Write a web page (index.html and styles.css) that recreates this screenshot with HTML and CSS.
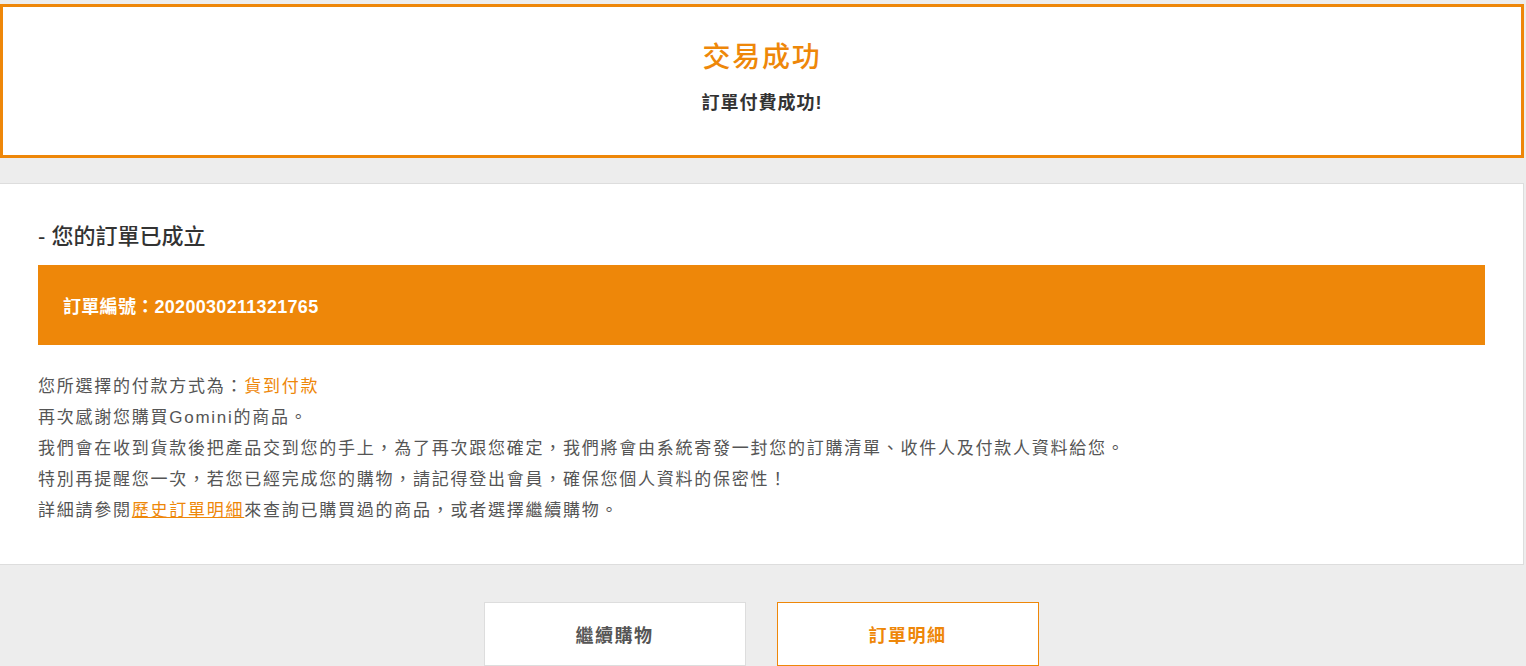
FILE: index.html
```html
<!DOCTYPE html>
<html lang="zh-Hant">

<head>
    <meta charset="UTF-8">
    <meta name="viewport" content="width=device-width, initial-scale=1.0">
    <title>交易成功</title>
    <link rel="stylesheet" href="styles.css">
</head>

<body>
    <div class="page">
        <div class="result">
            <h1 class="result-title">交易成功</h1>
            <p class="result-sub">訂單付費成功!</p>
        </div>

        <div class="order">
            <h2 class="order-title">- 您的訂單已成立</h2>
            <div class="order-no">訂單編號：2020030211321765</div>
            <div class="order-text">
                <p>您所選擇的付款方式為：<span class="hl">貨到付款</span></p>
                <p>再次感謝您購買Gomini的商品。</p>
                <p>我們會在收到貨款後把產品交到您的手上，為了再次跟您確定，我們將會由系統寄發一封您的訂購清單、收件人及付款人資料給您。</p>
                <p>特別再提醒您一次，若您已經完成您的購物，請記得登出會員，確保您個人資料的保密性！</p>
                <p>詳細請參閱<a href="#" class="link">歷史訂單明細</a>來查詢已購買過的商品，或者選擇繼續購物。</p>
            </div>
        </div>

        <div class="actions">
            <a href="#" class="btn">繼續購物</a>
            <a href="#" class="btn btn-main">訂單明細</a>
        </div>
    </div>
</body>

</html>
```

FILE: styles.css
```css
body {
    margin: 0;
    background: #ededed;
    font-family: "Liberation Sans", "Noto Sans CJK TC", sans-serif;
    color: #555;
}

.page {
    width: 1524px;
    padding-top: 4px;
}

.result {
    background: #fff;
    border: 3px solid #ee8709;
    padding-top: 31px;
    box-sizing: border-box;
    height: 154px;
    text-align: center;
}

.result-title {
    margin: 0;
    font-size: 28px;
    line-height: 40px;
    font-weight: 500;
    letter-spacing: 1.8px;
    color: #ee8709;
}

.result-sub {
    margin: 12px 0 0;
    font-size: 18px;
    line-height: 26px;
    font-weight: bold;
    letter-spacing: 1px;
    color: #333;
}

.order {
    margin-top: 25px;
    background: #fff;
    border: 1px solid #ddd;
    border-left: none;
    padding: 38px 38px 38px;
}

.order-title {
    margin: 0 0 13px;
    font-size: 22px;
    line-height: 30px;
    font-weight: 500;
    color: #333;
}

.order-no {
    height: 80px;
    display: flex;
    align-items: center;
    padding-left: 25px;
    background: #ee8709;
    color: #fff;
    font-size: 18px;
    font-weight: bold;
    letter-spacing: 0.3px;
}

.order-text {
    margin-top: 26px;
}

.order-text p {
    margin: 0;
    font-size: 17px;
    line-height: 31px;
    letter-spacing: 1.75px;
    color: #555;
}

.hl {
    color: #ee8709;
}

.link {
    color: #ee8709;
    text-decoration: underline;
}

.actions {
    display: flex;
    justify-content: center;
    gap: 31px;
    padding-top: 37px;
    padding-right: 2px;
}

.btn {
    width: 262px;
    height: 64px;
    box-sizing: border-box;
    display: flex;
    align-items: center;
    justify-content: center;
    background: #fff;
    border: 1px solid #ddd;
    color: #555;
    font-size: 18px;
    font-weight: bold;
    letter-spacing: 1.5px;
    text-decoration: none;
}

.btn-main {
    border-color: #ee8709;
    color: #ee8709;
}
```
